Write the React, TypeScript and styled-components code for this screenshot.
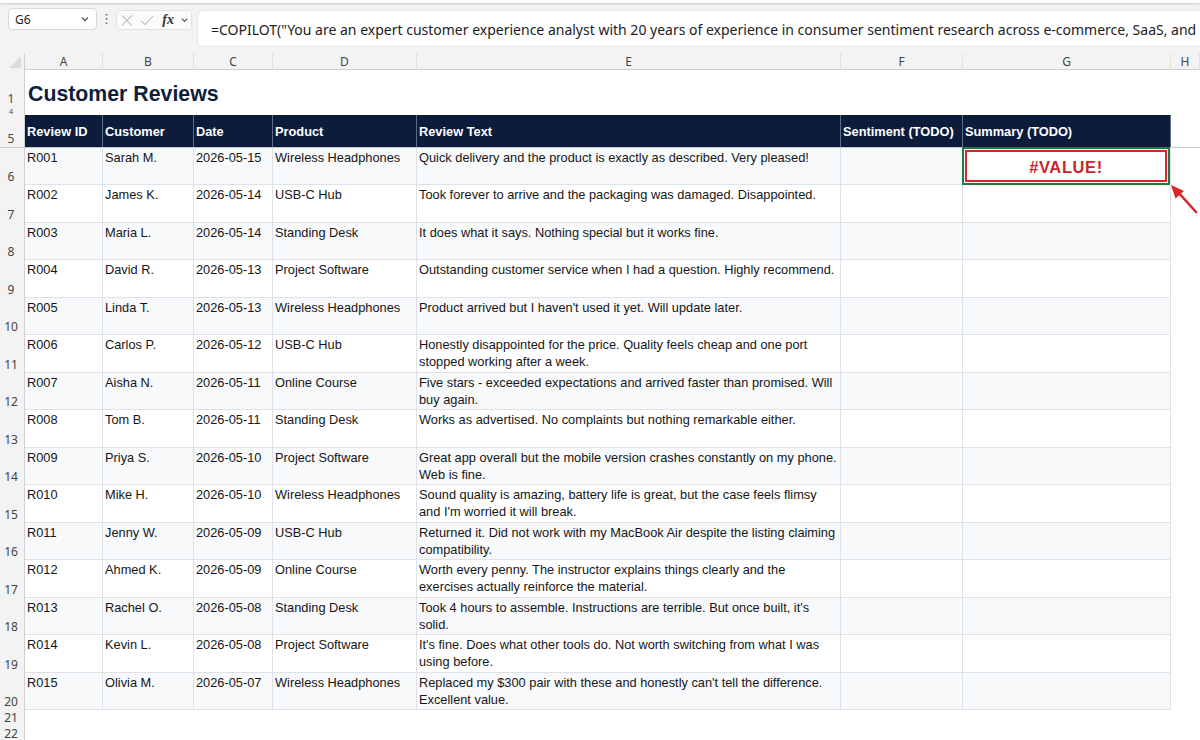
import React from "react";
import styled, {createGlobalStyle} from "styled-components";

const COLS = "25px 78px 91px 79px 144px 424px 122px 208px 1fr";

const GlobalStyle = createGlobalStyle`
    html, body {
        margin: 0;
        padding: 0;
        background: #f3f3f3;
        overflow: hidden;
    }
    * {
        box-sizing: border-box;
    }
`

const Page = styled.div`
    position: relative;
    width: 1200px;
    height: 740px;
    overflow: hidden;
    background: #f3f3f3;
    font-family: "Liberation Sans", Arial, sans-serif;
`

const TopStrip = styled.div`
    height: 3px;
    background: #ffffff;
    box-shadow: 0 1px 2px rgba(0, 0, 0, 0.18);
`

const FormulaRow = styled.div`
    display: flex;
    align-items: flex-start;
    height: 50px;
    padding: 5px 0 0 8px;
`

const NameBox = styled.div`
    display: flex;
    align-items: center;
    justify-content: space-between;
    width: 89px;
    height: 22px;
    padding: 0 6px;
    background: #ffffff;
    border: 1px solid #d9d9d9;
    border-radius: 4px;
    font-family: "Noto Sans", sans-serif;
    font-size: 12px;
    color: #222;
`

const Dots = styled.div`
    width: 19px;
    text-align: center;
    font-family: "DejaVu Sans", sans-serif;
    font-size: 13px;
    line-height: 22px;
    color: #555;
`

const FxBox = styled.div`
    display: flex;
    align-items: center;
    gap: 6px;
    width: 76px;
    height: 20px;
    margin-top: 2px;
    padding: 0 2px 0 3px;
    background: #fbfbfb;
    border: 1px solid #e2e2e2;
    border-radius: 4px;
`

const FxText = styled.span`
    font-family: "Liberation Serif", serif;
    font-style: italic;
    font-weight: bold;
    font-size: 14px;
    color: #333;
    margin-left: 2px;
`

const FormulaInput = styled.div`
    flex: 1;
    height: 37px;
    margin: 2px 0 0 5px;
    padding-left: 13px;
    background: #ffffff;
    border: 1px solid #e6e6e6;
    border-right: none;
    border-radius: 6px 0 0 6px;
    font-family: "Noto Sans", sans-serif;
    font-size: 14px;
    line-height: 38px;
    color: #222;
    white-space: nowrap;
    overflow: hidden;
`

const Row = styled.div<{ $h: number }>`
    display: grid;
    grid-template-columns: ${COLS};
    height: ${p => p.$h}px;
`

const ColHeaderRow = styled(Row)`
    border-bottom: 1px solid #d0d0d0;
`

const Corner = styled.div`
    position: relative;
    background: #f3f3f3;
    border-right: 1px solid #d0d0d0;

    &::after {
        content: "";
        position: absolute;
        right: 3px;
        bottom: 2px;
        width: 0;
        height: 0;
        border-left: 12px solid transparent;
        border-bottom: 12px solid #dcdcdc;
    }
`

const ColLetter = styled.div`
    display: flex;
    align-items: center;
    justify-content: center;
    border-right: 1px solid #e2e2e2;
    font-family: "Noto Sans", sans-serif;
    font-size: 12px;
    color: #444;
`

const RowNum = styled.div<{ $tiny?: boolean }>`
    display: flex;
    align-items: flex-end;
    justify-content: center;
    padding-bottom: ${p => p.$tiny ? 0 : 1}px;
    padding-right: 2px;
    background: #f3f3f3;
    border-right: 1px solid #d0d0d0;
    font-family: "Noto Sans", sans-serif;
    font-size: ${p => p.$tiny ? 7 : 12}px;
    line-height: ${p => p.$tiny ? 7 : 14}px;
    color: #444;
`

const Blank = styled.div`
    background: #ffffff;
`

const Title = styled.div`
    grid-column: 2 / -1;
    background: #ffffff;
    padding: 12px 0 0 3px;
    font-size: 21.3px;
    font-weight: bold;
    color: #0f1e3d;
`

const HeaderRow = styled(Row)`
    border-bottom: 1px solid #c9c9c9;
`

const HeadCell = styled.div`
    display: flex;
    align-items: center;
    padding: 0 2px;
    background: #0d1c3b;
    border-right: 1px solid #5b6a86;
    font-size: 12.8px;
    font-weight: bold;
    color: #ffffff;
    white-space: nowrap;
`

const Cell = styled.div<{ $alt: boolean }>`
    position: relative;
    padding: 2px 2px 0 2px;
    background: ${p => p.$alt ? "#f7f9fb" : "#ffffff"};
    border-right: 1px solid #dde2e8;
    border-bottom: 1px solid #dde2e8;
    font-size: 12.8px;
    line-height: 16.5px;
    color: #161616;
`

const ErrorBox = styled.div`
    position: absolute;
    inset: -1px 0 -1px -1px;
    border: 2px solid #1f7a45;
    padding: 1px;
`

const ErrorInner = styled.div`
    height: 100%;
    display: flex;
    align-items: center;
    justify-content: center;
    padding-top: 3px;
    border: 2px solid #d8262b;
    background: #ffffff;
    font-size: 16.5px;
    font-weight: bold;
    color: #c8262b;
    letter-spacing: 0.6px;
`

const Arrow = styled.svg`
    position: absolute;
    left: 1160px;
    top: 178px;
`

type Review = [string, string, string, string, string];

const reviews: Review[] = [
    ["R001", "Sarah M.", "2026-05-15", "Wireless Headphones", "Quick delivery and the product is exactly as described. Very pleased!"],
    ["R002", "James K.", "2026-05-14", "USB-C Hub", "Took forever to arrive and the packaging was damaged. Disappointed."],
    ["R003", "Maria L.", "2026-05-14", "Standing Desk", "It does what it says. Nothing special but it works fine."],
    ["R004", "David R.", "2026-05-13", "Project Software", "Outstanding customer service when I had a question. Highly recommend."],
    ["R005", "Linda T.", "2026-05-13", "Wireless Headphones", "Product arrived but I haven't used it yet. Will update later."],
    ["R006", "Carlos P.", "2026-05-12", "USB-C Hub", "Honestly disappointed for the price. Quality feels cheap and one port stopped working after a week."],
    ["R007", "Aisha N.", "2026-05-11", "Online Course", "Five stars - exceeded expectations and arrived faster than promised. Will buy again."],
    ["R008", "Tom B.", "2026-05-11", "Standing Desk", "Works as advertised. No complaints but nothing remarkable either."],
    ["R009", "Priya S.", "2026-05-10", "Project Software", "Great app overall but the mobile version crashes constantly on my phone. Web is fine."],
    ["R010", "Mike H.", "2026-05-10", "Wireless Headphones", "Sound quality is amazing, battery life is great, but the case feels flimsy and I'm worried it will break."],
    ["R011", "Jenny W.", "2026-05-09", "USB-C Hub", "Returned it. Did not work with my MacBook Air despite the listing claiming compatibility."],
    ["R012", "Ahmed K.", "2026-05-09", "Online Course", "Worth every penny. The instructor explains things clearly and the exercises actually reinforce the material."],
    ["R013", "Rachel O.", "2026-05-08", "Standing Desk", "Took 4 hours to assemble. Instructions are terrible. But once built, it's solid."],
    ["R014", "Kevin L.", "2026-05-08", "Project Software", "It's fine. Does what other tools do. Not worth switching from what I was using before."],
    ["R015", "Olivia M.", "2026-05-07", "Wireless Headphones", "Replaced my $300 pair with these and honestly can't tell the difference. Excellent value."],
];

const headers = ["Review ID", "Customer", "Date", "Product", "Review Text", "Sentiment (TODO)", "Summary (TODO)"];
const letters = ["A", "B", "C", "D", "E", "F", "G", "H"];

function Chevron() {
    return (
        <svg width="10" height="10" viewBox="0 0 10 10">
            <path d="M2 3.5 L5 6.5 L8 3.5" fill="none" stroke="#555" strokeWidth="1.3"/>
        </svg>
    )
}

export default function App() {
    return (
        <Page>
            <GlobalStyle/>
            <TopStrip/>
            <FormulaRow>
                <NameBox>
                    <span>G6</span>
                    <Chevron/>
                </NameBox>
                <Dots>⋮</Dots>
                <FxBox>
                    <svg width="15" height="15" viewBox="0 0 15 15">
                        <path d="M2 2 L13 13 M13 2 L2 13" stroke="#c4c4c4" strokeWidth="1.2"/>
                    </svg>
                    <svg width="16" height="15" viewBox="0 0 16 15">
                        <path d="M1.5 8 L5.5 12 L14.5 2.5" fill="none" stroke="#c4c4c4" strokeWidth="1.2"/>
                    </svg>
                    <FxText>fx</FxText>
                    <Chevron/>
                </FxBox>
                <FormulaInput>
                    =COPILOT("You are an expert customer experience analyst with 20 years of experience in consumer sentiment research across e-commerce, SaaS, and retail.
                </FormulaInput>
            </FormulaRow>

            <ColHeaderRow $h={17}>
                <Corner/>
                {letters.map(l => <ColLetter key={l}>{l}</ColLetter>)}
            </ColHeaderRow>

            <Row $h={37}>
                <RowNum>1</RowNum>
                <Title>Customer Reviews</Title>
            </Row>
            <Row $h={8}>
                <RowNum $tiny>4</RowNum>
                <Blank style={{gridColumn: "2 / -1"}}/>
            </Row>

            <HeaderRow $h={33}>
                <RowNum>5</RowNum>
                {headers.map(h => <HeadCell key={h}>{h}</HeadCell>)}
                <Blank/>
            </HeaderRow>

            {reviews.map((r, i) => (
                <Row $h={i % 2 === 0 ? 37 : 38} key={r[0]}>
                    <RowNum>{i + 6}</RowNum>
                    {r.map((v, j) => <Cell $alt={i % 2 === 0} key={j}>{v}</Cell>)}
                    <Cell $alt={i % 2 === 0}/>
                    <Cell $alt={i % 2 === 0}>
                        {i === 0 && (
                            <ErrorBox>
                                <ErrorInner>#VALUE!</ErrorInner>
                            </ErrorBox>
                        )}
                    </Cell>
                    <Blank/>
                </Row>
            ))}

            <Row $h={16}>
                <RowNum>21</RowNum>
                <Blank style={{gridColumn: "2 / -1"}}/>
            </Row>
            <Row $h={16}>
                <RowNum>22</RowNum>
                <Blank style={{gridColumn: "2 / -1"}}/>
            </Row>

            <Arrow width="40" height="40" viewBox="0 0 40 40">
                <path d="M36 34 L18 14" stroke="#d8262b" strokeWidth="2.6" strokeLinecap="round"/>
                <path d="M11 7 L24 13 L15.5 20.5 Z" fill="#d8262b"/>
            </Arrow>
        </Page>
    )
}
